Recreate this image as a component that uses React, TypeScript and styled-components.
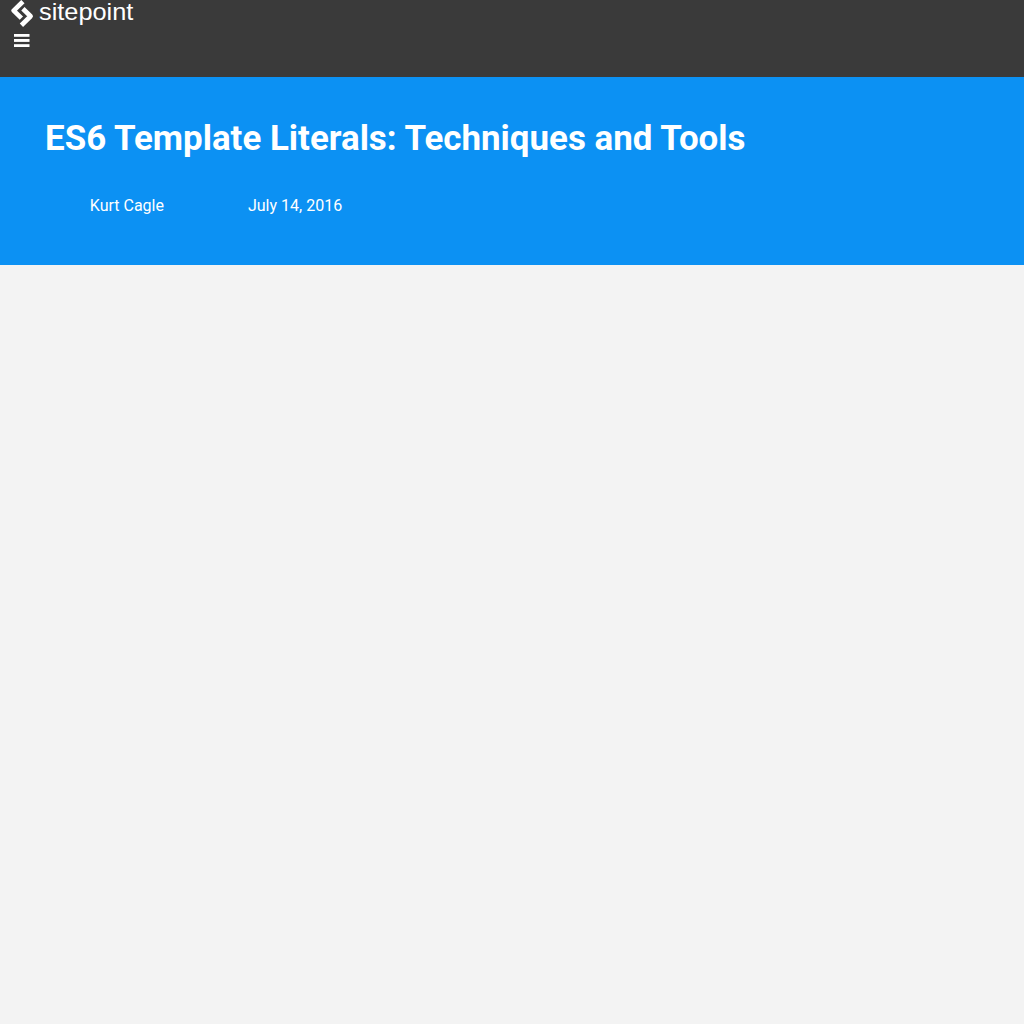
import React from 'react';
import styled, { createGlobalStyle } from 'styled-components';

const GlobalStyle = createGlobalStyle`
  html, body { margin: 0; padding: 0; }
  body {
    min-height: 100vh;
    background: #f3f3f3;
    font-family: Roboto, "Liberation Sans", sans-serif;
    font-size: 16px;
  }
`;

const TopBar = styled.header`
  box-sizing: border-box;
  height: 77px;
  background: #3a3a3a;
  color: #fff;
`;

const Brand = styled.a`
  display: flex;
  align-items: flex-start;
  height: 27px;
  padding-left: 9px;
  color: inherit;
  text-decoration: none;
`;

const Mark = styled.svg`
  display: block;
  flex: none;
  width: 27px;
  height: 27px;
`;

const Wordmark = styled.span`
  margin-left: 3px;
  font-family: "Liberation Sans", Arial, sans-serif;
  font-size: 24px;
  line-height: 24px;
  white-space: nowrap;
  transform: scaleX(1.055);
  transform-origin: left top;
`;

const MenuButton = styled.button`
  display: flex;
  margin: 7px 0 0 14px;
  padding: 0;
  border: 0;
  background: none;
  color: #fff;
`;

const Hero = styled.section`
  box-sizing: border-box;
  height: 188px;
  padding: 38px 45px 0;
  background: #0c91f3;
  color: #fff;
`;

const Title = styled.h1`
  margin: 0;
  font-size: 34.92px;
  font-weight: 700;
  line-height: 48px;
`;

const Meta = styled.div`
  display: flex;
  gap: 84px;
  margin-top: 31px;
  padding-left: 44.8px;
  line-height: 24px;
`;

export default function App() {
  return (
    <>
      <GlobalStyle />
      <TopBar>
        <Brand aria-label="sitepoint">
          <Mark viewBox="0 0 27 27" fill="none" stroke="currentColor" strokeWidth="4.7" strokeLinejoin="round">
            <path d="M13.9 1.6L4.7 10.6L12.4 18.1" />
            <path d="M13.9 8.7L21.6 16.2L12.4 25.2" />
          </Mark>
          <Wordmark>sitepoint</Wordmark>
        </Brand>
        <MenuButton aria-label="Menu">
          <svg width="16" height="13" viewBox="0 0 16 13" fill="currentColor">
            <rect width="15.5" height="2.8" />
            <rect y="5" width="15.5" height="2.9" />
            <rect y="10.2" width="15.5" height="2.8" />
          </svg>
        </MenuButton>
      </TopBar>
      <Hero>
        <Title>ES6 Template Literals: Techniques and Tools</Title>
        <Meta>
          <span>Kurt Cagle</span>
          <span>July 14, 2016</span>
        </Meta>
      </Hero>
    </>
  );
}
